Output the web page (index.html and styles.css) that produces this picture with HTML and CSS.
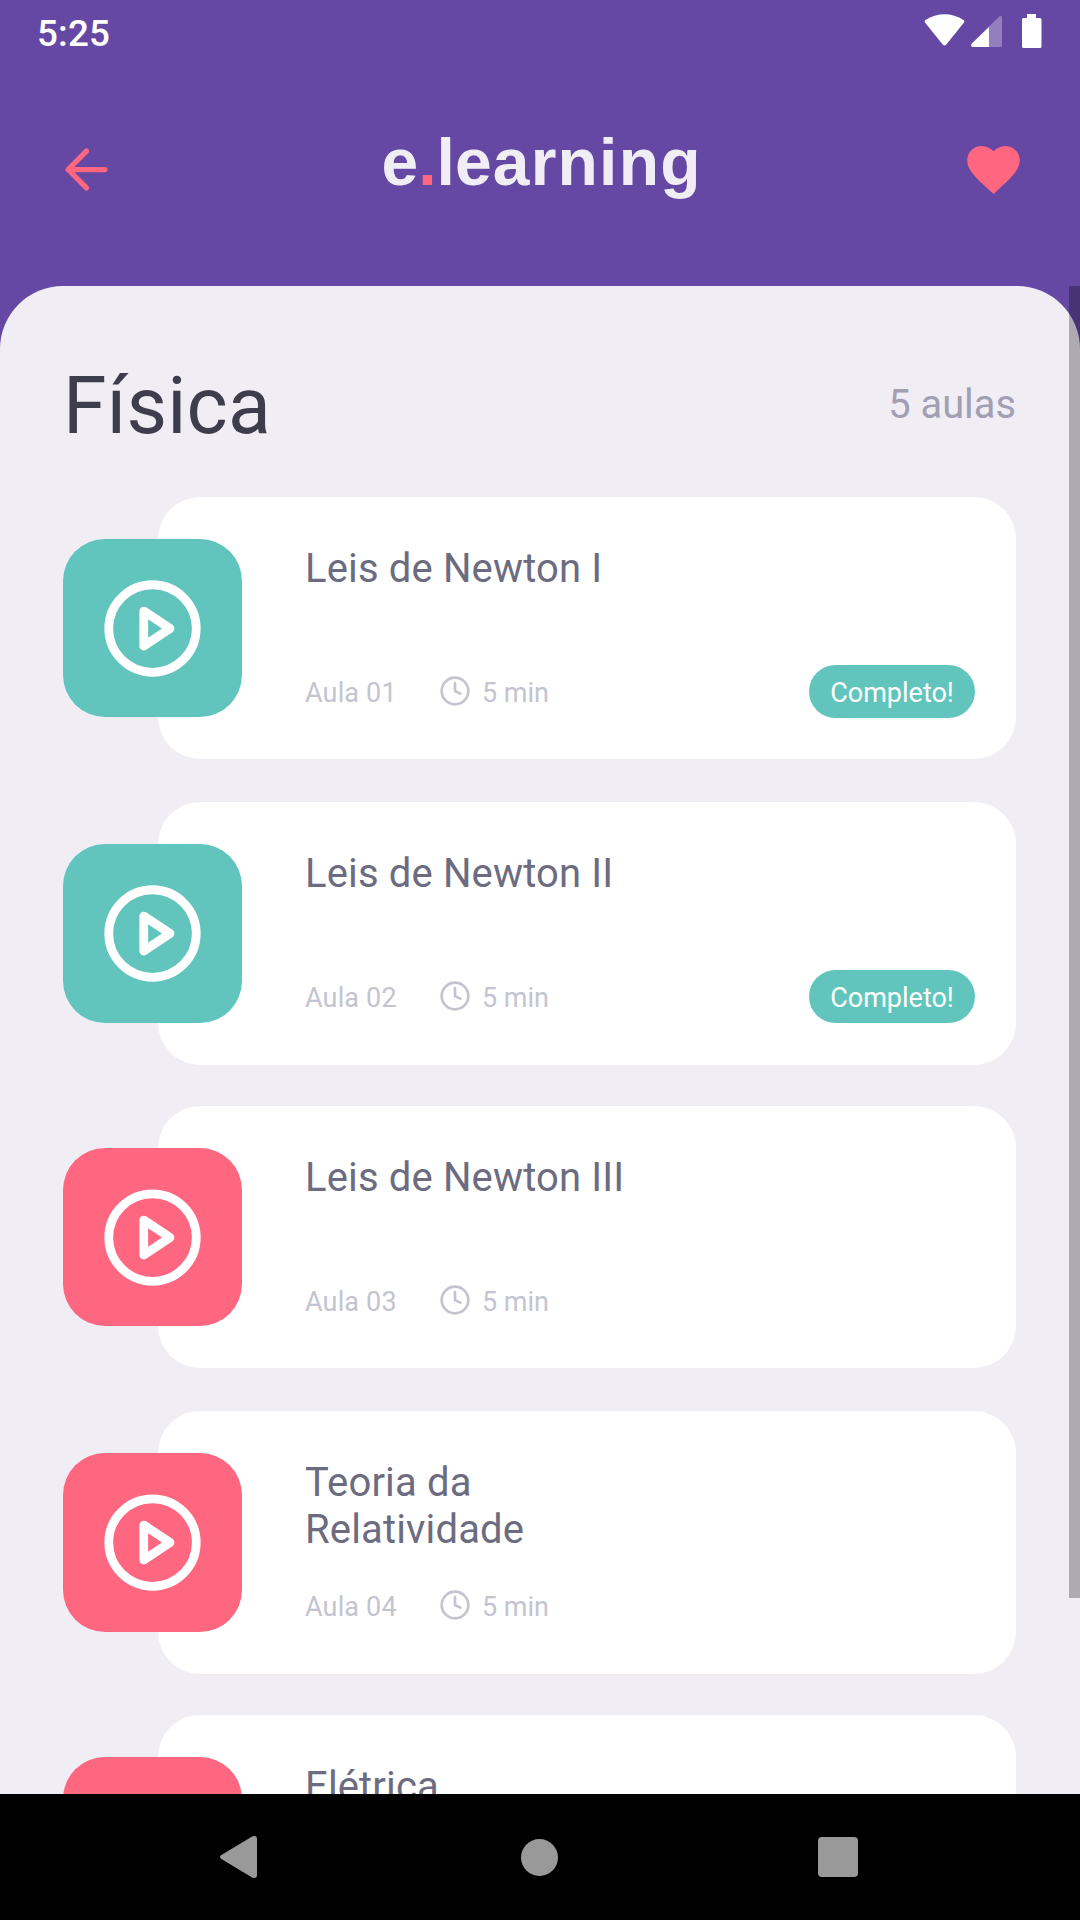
FILE: index.html
```html
<!DOCTYPE html>
<html lang="pt-BR">
<head>
<meta charset="utf-8">
<title>e.learning</title>
<link rel="stylesheet" href="styles.css">
</head>
<body>
<svg class="defs" width="0" height="0" aria-hidden="true">
  <symbol id="play" viewBox="0 0 24 24"><circle cx="12" cy="12" r="10"/><path d="M10 8l6 4-6 4z"/></symbol>
  <symbol id="clock" viewBox="0 0 24 24"><circle cx="12" cy="12" r="10"/><path d="M12 6v6l4 2"/></symbol>
</svg>
<div class="screen">
  <div class="status">
    <span class="time">5:25</span>
    <svg class="status-icons" width="120" height="36" viewBox="0 0 120 36">
      <path d="M1 8.500Q0 7 1.500 6C13-1.600 28-1.600 39.500 6Q41 7 40 8.500L22.300 30.600Q20.500 32.600 18.700 30.600z"/>
      <path opacity=".3" d="M47.500 33Q46 31 48 29L75 2.700Q78 1 78 3.500V31.500Q78 33 76.500 33z"/>
      <path d="M65 13V33H48.500Q46 32 48 29.500z"/>
      <path d="M103 0h9v4h4q1.500 0 1.500 1.500v27q0 1.500-1.500 1.500h-16.500q-1.500 0-1.500-1.500v-27q0-1.500 1.500-1.500h3.500z"/>
    </svg>
  </div>
  <header class="header">
    <svg class="back" viewBox="0 0 24 24"><path d="M19 12H5M12 19l-7-7 7-7"/></svg>
    <div class="logo">e<span class="dot">.</span>l<span class="tail">earning</span></div>
    <svg class="heart" viewBox="0 0 24 24"><path d="M12 21.350l-1.450-1.320C5.400 15.360 2 12.280 2 8.500 2 5.420 4.420 3 7.500 3c1.740 0 3.410.810 4.500 2.090C13.090 3.810 14.760 3 16.500 3 19.580 3 22 5.420 22 8.500c0 3.780-3.400 6.860-8.550 11.540L12 21.350z"/></svg>
  </header>
  <main class="viewport">
    <div class="panel">
      <div class="heading">
        <h1>Física</h1>
        <span class="count">5 aulas</span>
      </div>
      <div class="lessons">
        <article class="lesson done">
          <div class="tile"><svg><use href="#play"/></svg></div>
          <div class="card"><h2>Leis de Newton I</h2>
            <div class="meta"><span class="number">Aula 01</span><svg class="clock"><use href="#clock"/></svg><span class="label">5 min</span><span class="pill"><span class="label">Completo!</span></span></div></div>
        </article>
        <article class="lesson done">
          <div class="tile"><svg><use href="#play"/></svg></div>
          <div class="card"><h2>Leis de Newton II</h2>
            <div class="meta"><span class="number">Aula 02</span><svg class="clock"><use href="#clock"/></svg><span class="label">5 min</span><span class="pill"><span class="label">Completo!</span></span></div></div>
        </article>
        <article class="lesson">
          <div class="tile"><svg><use href="#play"/></svg></div>
          <div class="card"><h2>Leis de Newton III</h2>
            <div class="meta"><span class="number">Aula 03</span><svg class="clock"><use href="#clock"/></svg><span class="label">5 min</span></div></div>
        </article>
        <article class="lesson">
          <div class="tile"><svg><use href="#play"/></svg></div>
          <div class="card"><h2>Teoria da Relatividade</h2>
            <div class="meta"><span class="number">Aula 04</span><svg class="clock"><use href="#clock"/></svg><span class="label">5 min</span></div></div>
        </article>
        <article class="lesson">
          <div class="tile"></div>
          <div class="card"><h2>Elétrica</h2></div>
        </article>
      </div>
    </div>
    <div class="scrollbar"></div>
  </main>
  <nav class="nav">
    <svg width="38" height="44" viewBox="0 0 38 44"><path d="M1 20.300L32.500 1.300Q37 0 37 4V40Q37 44 32.500 42.700L1 23.700Q-1 22 1 20.300z"/></svg>
    <svg width="39" height="37" viewBox="0 0 39 37"><circle cx="20.500" cy="18.500" r="18.500"/></svg>
    <svg width="40" height="40" viewBox="0 0 40 40"><rect width="40" height="40" rx="4"/></svg>
  </nav>
</div>
</body>
</html>
```
FILE: styles.css
```css
* { box-sizing: border-box; }
body { margin: 0; font-family: Roboto, "Liberation Sans", sans-serif; }
h1, h2 { margin: 0; font-weight: 400; }
svg { display: block; flex: none; }
.defs { position: absolute; }
.screen {
  width: 1080px; height: 1920px; overflow: hidden;
  display: flex; flex-direction: column; background: #6548a3;
}
.status {
  height: 63px; flex: none; display: flex; justify-content: space-between;
  align-items: flex-start; padding: 12px 36px 0 37px;
}
.time { font-size: 36.750px; line-height: 44px; font-weight: 500; letter-spacing: .2px; color: #fff; }
.status-icons { fill: #fff; margin-top: 2px; }
.header {
  height: 223px; flex: none; display: flex; justify-content: space-between;
  align-items: flex-start; padding: 74px 55px 0;
}
.back, .heart { width: 63px; height: 63px; }
.back { fill: none; stroke: #ff6680; stroke-width: 2; stroke-linecap: round; stroke-linejoin: round; margin-top: 1px; }
.heart { fill: #ff6680; margin-top: .5px; }
.logo {
  width: 317px; white-space: nowrap;
  font: 700 66px/51px "Liberation Sans", Arial, sans-serif; color: #f0edf5;
}
.tail { letter-spacing: 1.200px; }
.dot { color: #ff6680; }
.viewport { position: relative; height: 1508px; flex: none; overflow: hidden; }
.panel {
  height: 1600px; padding: 0 64px 0 63px;
  background: #f0edf5; border-radius: 63px 63px 0 0;
}
.heading { height: 211px; display: flex; justify-content: space-between; align-items: center; padding-top: 26px; }
h1 { font-size: 78.750px; line-height: 92px; letter-spacing: .2px; color: #3d3d4c; padding-top: 3px; }
.count { font-size: 39.800px; line-height: 47px; color: #a0a0b2; }
.lessons { display: flex; flex-direction: column; gap: 41px; }
.lesson { height: 262px; flex: none; display: flex; align-items: center; margin-bottom: 2px; }
.lesson:nth-child(even) { height: 263px; margin-bottom: 0; }
.tile {
  width: 179px; height: 178px; flex: none; border-radius: 42px; z-index: 1;
  margin-right: -84px; display: grid; place-items: center; background: #ff6680;
}
.lesson:nth-child(even) .tile { height: 179px; }
.tile svg { width: 105px; height: 105px; fill: none; stroke: #fff; stroke-width: 2; stroke-linecap: round; stroke-linejoin: round; }
.done .tile { background: #61c5bd; }
.card {
  flex: 1; height: 100%; border-radius: 42px; background: #fff;
  padding: 48px 41px 0 147px; display: flex; flex-direction: column;
}
h2 { width: 340px; height: 120px; font-size: 40px; line-height: 47px; letter-spacing: .15px; color: #6c6c80; }
.meta { height: 53px; display: flex; align-items: center; font-size: 27px; line-height: 32px; color: #c4c4d1; }
.number { width: 134px; letter-spacing: .15px; padding-top: 3px; }
.label { padding-top: 3px; }
.clock { width: 32px; height: 32px; margin: -1px 11px 0 0; fill: none; stroke: #c4c4d1; stroke-width: 2; stroke-linecap: round; stroke-linejoin: round; }
.pill {
  margin-left: auto; width: 166px; height: 53px; border-radius: 27px;
  display: grid; place-items: center; background: #61c5bd; color: #fff;
}
.scrollbar { position: absolute; right: 0; top: 0; width: 11px; height: 1312px; background: rgba(0, 0, 0, .28); }
.nav { flex: 1; background: #000; display: flex; align-items: center; justify-content: space-between; padding: 0 222px 0 220px; fill: #999; }
```
